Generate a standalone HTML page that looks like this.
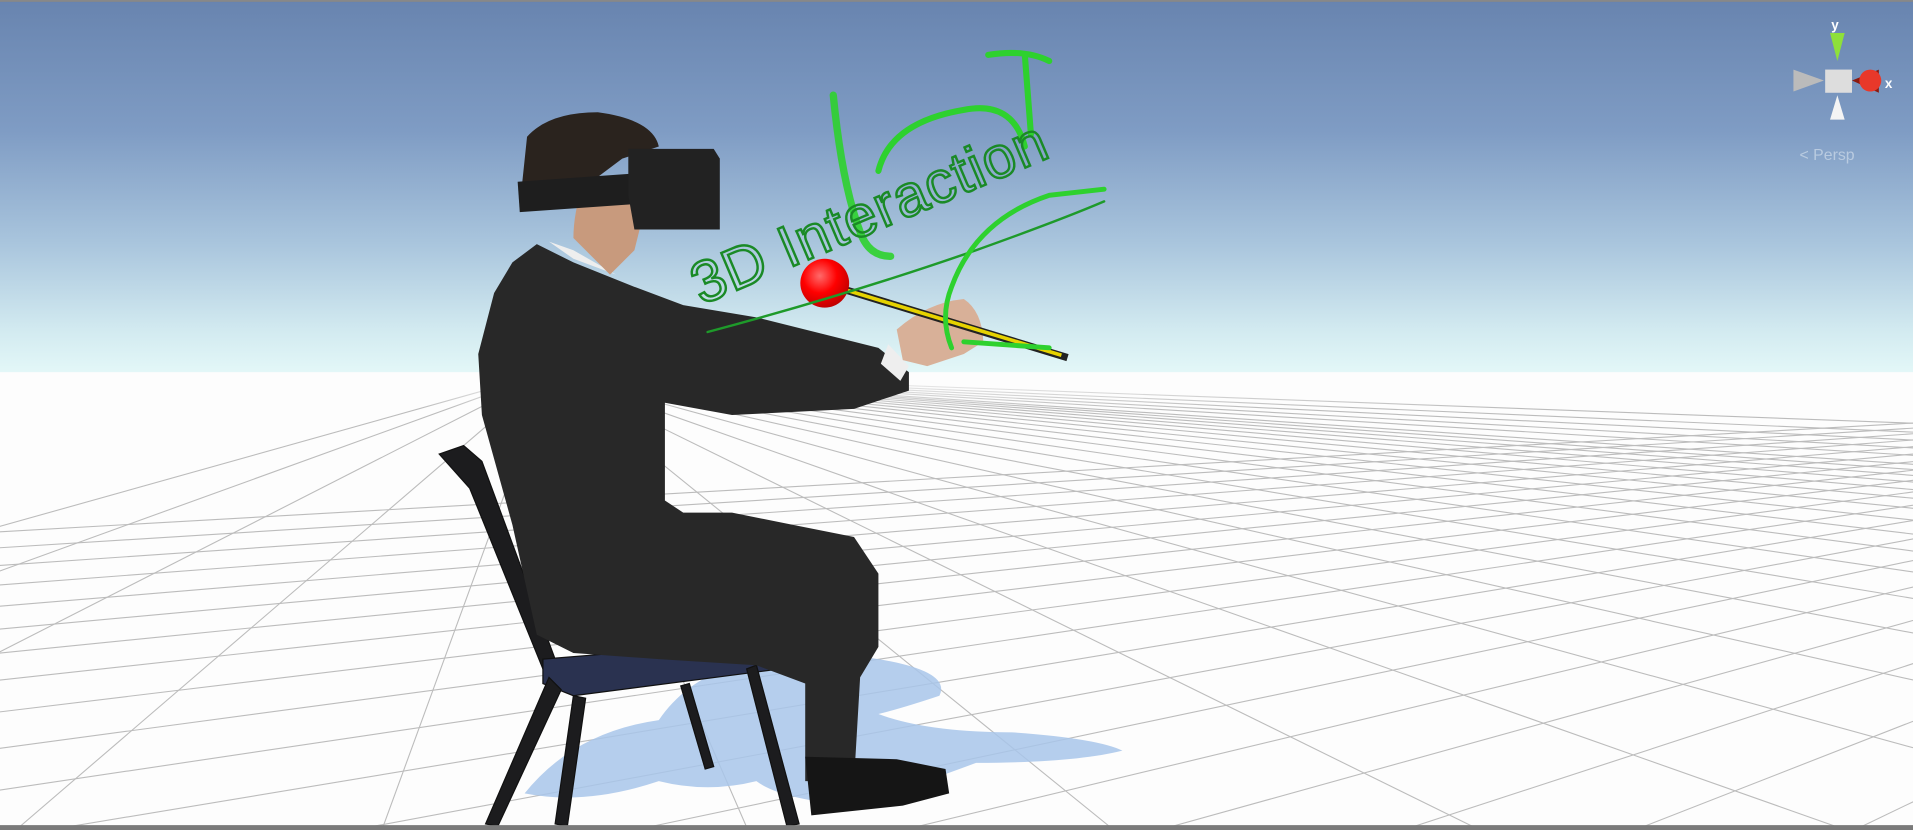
<!DOCTYPE html>
<html><head><meta charset="utf-8"><style>
html,body{margin:0;padding:0;width:1913px;height:830px;overflow:hidden;background:#fff}
svg{display:block}
</style></head><body>
<svg width="1913" height="830" viewBox="0 0 1568 680" preserveAspectRatio="none" xmlns="http://www.w3.org/2000/svg">
<defs>
<linearGradient id="sky" x1="0" y1="0" x2="0" y2="1">
<stop offset="0" stop-color="#6884af"/>
<stop offset="0.35" stop-color="#7f9cc4"/>
<stop offset="0.65" stop-color="#a9c5dd"/>
<stop offset="0.88" stop-color="#d2eaf0"/>
<stop offset="1" stop-color="#e4f8f8"/>
</linearGradient>
<linearGradient id="fade" x1="0" y1="0" x2="0" y2="1">
<stop offset="0" stop-color="#fdfdfd" stop-opacity="1"/>
<stop offset="1" stop-color="#fdfdfd" stop-opacity="0"/>
</linearGradient>
<radialGradient id="ball" cx="0.4" cy="0.35" r="0.7">
<stop offset="0" stop-color="#ff6a6a"/><stop offset="0.5" stop-color="#f00"/><stop offset="1" stop-color="#b00"/>
</radialGradient>
</defs>
<rect x="0" y="0" width="1568" height="307" fill="url(#sky)"/>
<rect x="0" y="305" width="1568" height="375" fill="#fdfdfd"/>
<g stroke="#bcbcbc" stroke-width="0.9" fill="none">
<path d="M2300 305 L-4300 680 M2300 305 L-3700 680 M2300 305 L-3150 680 M2300 305 L-2650 680 M2300 305 L-2200 680 M2300 305 L-1800 680 M2300 305 L-1450 680 M2300 305 L-1120 680 M2300 305 L-800 680 M2300 305 L-500 680 M2300 305 L-220 680 M2300 305 L40 680 M2300 305 L290 680 M2300 305 L520 680 M2300 305 L740 680 M2300 305 L950 680 M2300 305 L1150 680 M2300 305 L1340 680 M2300 305 L1520 680"/>
<path d="M450 305 L-887 680 M450 305 L-587 680 M450 305 L-287 680 M450 305 L13 680 M450 305 L313 680 M450 305 L613 680 M450 305 L913 680 M450 305 L1213 680 M450 305 L1513 680 M450 305 L1813 680 M450 305 L2113 680 M450 305 L2413 680 M450 305 L2713 680 M450 305 L3013 680 M450 305 L3313 680 M450 305 L3613 680 M450 305 L3913 680 M450 305 L4213 680 M450 305 L4513 680 M450 305 L4813 680 M450 305 L5113 680 M450 305 L5413 680 M450 305 L5713 680 M450 305 L6013 680 M450 305 L6613 680 M450 305 L7213 680 M450 305 L8000 680 M450 305 L9000 680 M450 305 L10500 680"/>
</g>
<rect x="0" y="305" width="1568" height="30" fill="url(#fade)"/>
<!-- shadow -->
<path d="M430 650 Q470 600 540 590 Q560 560 600 545 Q660 530 720 540 Q780 550 770 570 Q740 580 720 585 Q760 600 830 600 Q900 605 920 615 Q880 625 800 625 Q760 640 700 660 Q640 655 620 640 Q580 650 540 640 Q480 660 430 650Z" fill="#a8c6ea" opacity="0.85"/>
<!-- chair -->
<g fill="#1c1c1e" stroke="#111">
<path d="M360 372 L380 365 L395 378 L455 540 L445 548 L385 400Z"/>
<path d="M445 540 L630 525 L640 548 L470 570 L445 560Z" fill="#2a3250"/>
<path d="M450 555 L398 675 L408 677 L460 565Z"/>
<path d="M470 570 L455 675 L465 677 L480 572Z"/>
<path d="M620 545 L655 675 L645 677 L612 548Z"/>
<path d="M565 560 L585 628 L578 630 L558 562Z"/>
</g>
<!-- body -->
<g fill="#282828">
<path d="M440 200 L470 215 L520 235 L560 250 L620 260 L720 285 L745 305 L745 320 L700 335 L600 340 L545 330 L545 410 L560 420 L600 420 L650 430 L700 440 L720 470 L720 530 L705 555 L700 640 L660 640 L660 560 L620 545 L540 540 L470 535 L440 520 L420 430 L395 340 L392 290 L405 240 L420 215Z"/>
<path d="M660 620 L735 622 L775 630 L778 650 L740 660 L665 668Z" fill="#151515"/>
</g>
<path d="M728 282 L745 300 L738 312 L722 298Z" fill="#eee"/>
<path d="M735 270 Q760 248 790 245 Q805 255 806 280 L790 290 L760 300 L740 295Z" fill="#d8b098"/>
<path d="M450 198 L470 205 L505 225 L470 212Z" fill="#eee"/>
<!-- head -->
<path d="M478 150 Q470 175 470 195 L500 225 L520 205 L525 185 L560 180 L555 160 Z" fill="#c89a7d"/>
<path d="M432 112 Q450 92 490 92 Q535 98 540 120 L510 130 L470 160 L440 170 L428 150Z" fill="#2a231e"/>
<rect x="425" y="145" width="110" height="25" fill="#1e1e1e" transform="rotate(-4 480 157)"/>
<path d="M515 122 L585 122 L590 130 L590 188 L520 188 L515 160Z" fill="#222"/>
<!-- pencil -->
<line x1="688" y1="236" x2="875" y2="293" stroke="#222" stroke-width="6"/>
<line x1="688" y1="236" x2="870" y2="291" stroke="#e6d200" stroke-width="3"/>
<circle cx="676" cy="232" r="20" fill="url(#ball)"/>
<!-- green drawing -->
<g fill="none" stroke-linecap="round">
<path d="M580 272 Q700 240 800 205 Q870 180 905 165" stroke="#1e9a2a" stroke-width="2"/>
<path d="M683 78 Q690 150 705 190 Q712 210 730 210" stroke="#2ed12e" stroke-width="6" opacity="0.9"/>
<path d="M780 285 Q770 260 780 235 Q800 180 860 160 L905 155 M790 280 L860 285" stroke="#2ed12e" stroke-width="4"/>
<path d="M720 140 Q730 100 790 90 Q830 82 840 120 M810 45 Q840 40 860 50 M840 45 L845 110" stroke="#2ed12e" stroke-width="5"/>
</g>
<text x="0" y="0" transform="translate(575,250) rotate(-23)" font-family="Liberation Sans, sans-serif" font-size="48" fill="none" stroke="#1a8a26" stroke-width="2" letter-spacing="1">3D Interaction</text>
<!-- gizmo -->
<g>
<polygon points="1500,27 1512,27 1506,50" fill="#8ee03a"/>
<text x="1501" y="24" font-family="Liberation Sans, sans-serif" font-size="11" font-weight="bold" fill="#fff">y</text>
<polygon points="1470,57 1470,75 1495,66" fill="#bbb"/>
<rect x="1496" y="57" width="22" height="19" fill="#ddd"/>
<polygon points="1518,66 1540,57 1540,76" fill="#8a1a10"/>
<circle cx="1533" cy="66" r="9" fill="#e8382a"/>
<text x="1545" y="72" font-family="Liberation Sans, sans-serif" font-size="11" font-weight="bold" fill="#fff">x</text>
<polygon points="1500,98 1512,98 1506,78" fill="#f4f4f4"/>
<text x="1475" y="131" font-family="Liberation Sans, sans-serif" font-size="13" fill="#b9cbe0">&lt; Persp</text>
</g>
<rect x="0" y="0" width="1568" height="1.5" fill="#888"/>
<rect x="0" y="676" width="1568" height="4" fill="#7a7a7a"/>
</svg>
</body></html>
